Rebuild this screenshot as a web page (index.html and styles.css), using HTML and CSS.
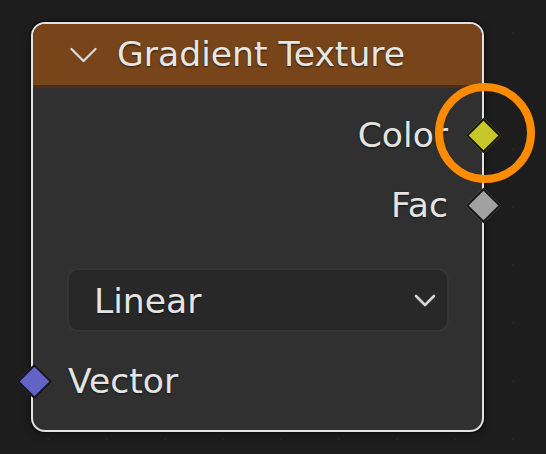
FILE: index.html
```html
<!DOCTYPE html>
<html>
<head>
<meta charset="utf-8">
<link rel="stylesheet" href="styles.css">
</head>
<body>
<div class="canvas">
  <div class="node">
    <div class="header">
      <svg class="collapse" width="27" height="16" viewBox="0 0 27 16"><path d="M1.5 2 L13.5 14 L25.5 2" fill="none" stroke="#dcdcdc" stroke-width="2.2" stroke-linecap="round" stroke-linejoin="round"/></svg>
      <span class="title">Gradient Texture</span>
    </div>
    <div class="body">
      <div class="row out">
        <span class="label">Color</span>
        <i class="socket socket-color"></i>
        <div class="ring"></div>
      </div>
      <div class="row out">
        <span class="label">Fac</span>
        <i class="socket socket-fac"></i>
      </div>
      <div class="select">
        <span class="label">Linear</span>
        <svg width="22" height="13" viewBox="0 0 22 13"><path d="M2 2 L11 11 L20 2" fill="none" stroke="#d4d4d4" stroke-width="2.6" stroke-linecap="round" stroke-linejoin="round"/></svg>
      </div>
      <div class="row in">
        <i class="socket socket-vector"></i>
        <span class="label">Vector</span>
      </div>
    </div>
  </div>
</div>
</body>
</html>
```
FILE: styles.css
```css
html, body {
  margin: 0;
  padding: 0;
}
body {
  width: 546px;
  height: 454px;
  overflow: hidden;
  background-color: #1d1d1d;
  background-image: radial-gradient(circle, #262626 1.2px, transparent 1.8px);
  background-size: 58px 58px;
  background-position: 20px 4px;
  font-family: "DejaVu Sans", "Liberation Sans", sans-serif;
  color: #e4e4e4;
}
.canvas {
  padding: 22px 0 0 31px;
}
.node {
  width: 449px;
  height: 406px;
  border: 2px solid #e2e2e2;
  border-radius: 14px;
  box-shadow: 0 0 0 1.5px #101010, 0 3px 8px rgba(0,0,0,0.35);
  background: #303030;
  display: flex;
  flex-direction: column;
}
.header {
  height: 61px;
  background: #774519;
  border-bottom: 3px solid #4f2f12;
  border-radius: 12px 12px 0 0;
  display: flex;
  align-items: center;
  padding-left: 37px;
  gap: 20px;
}
.collapse {
  margin-top: 1px;
}
.title {
  font-size: 34.6px;
  line-height: 1;
  text-shadow: 0 1px 2px rgba(0,0,0,0.6);
  color: #e6e6e6;
}
.body {
  display: flex;
  flex-direction: column;
  padding: 12px 0 19px 0;
}
.row {
  position: relative;
  height: 70px;
  display: flex;
  align-items: center;
}
.row.out {
  justify-content: flex-end;
  padding-right: 34px;
}
.row.in {
  height: 60px;
  margin-top: 19px;
  padding-left: 35px;
}
.label {
  font-size: 34.6px;
  line-height: 1;
  text-shadow: 0 1px 2px rgba(0,0,0,0.6);
  color: #e4e4e4;
}
.socket {
  position: absolute;
  top: calc(50% - 12.5px);
  width: 21px;
  height: 21px;
  border: 2px solid #161616;
  transform: rotate(45deg);
}
.out .socket {
  right: -13.5px;
}
.in .socket {
  left: -11px;
}
.socket-color {
  background: #c7c729;
}
.socket-fac {
  background: #a1a1a1;
}
.socket-vector {
  background: #6363c7;
}
.ring {
  position: absolute;
  left: 402px;
  top: -17px;
  width: 84px;
  height: 84px;
  border: 8px solid #ff8c00;
  border-radius: 50%;
}
.select {
  margin: 28px 33px 0 34px;
  height: 60px;
  border: 2px solid #353535;
  border-radius: 11px;
  background: #282828;
  display: flex;
  align-items: center;
  justify-content: space-between;
  padding: 0 11px 0 25px;
}
.select .label {
  margin-top: 2px;
}
```
